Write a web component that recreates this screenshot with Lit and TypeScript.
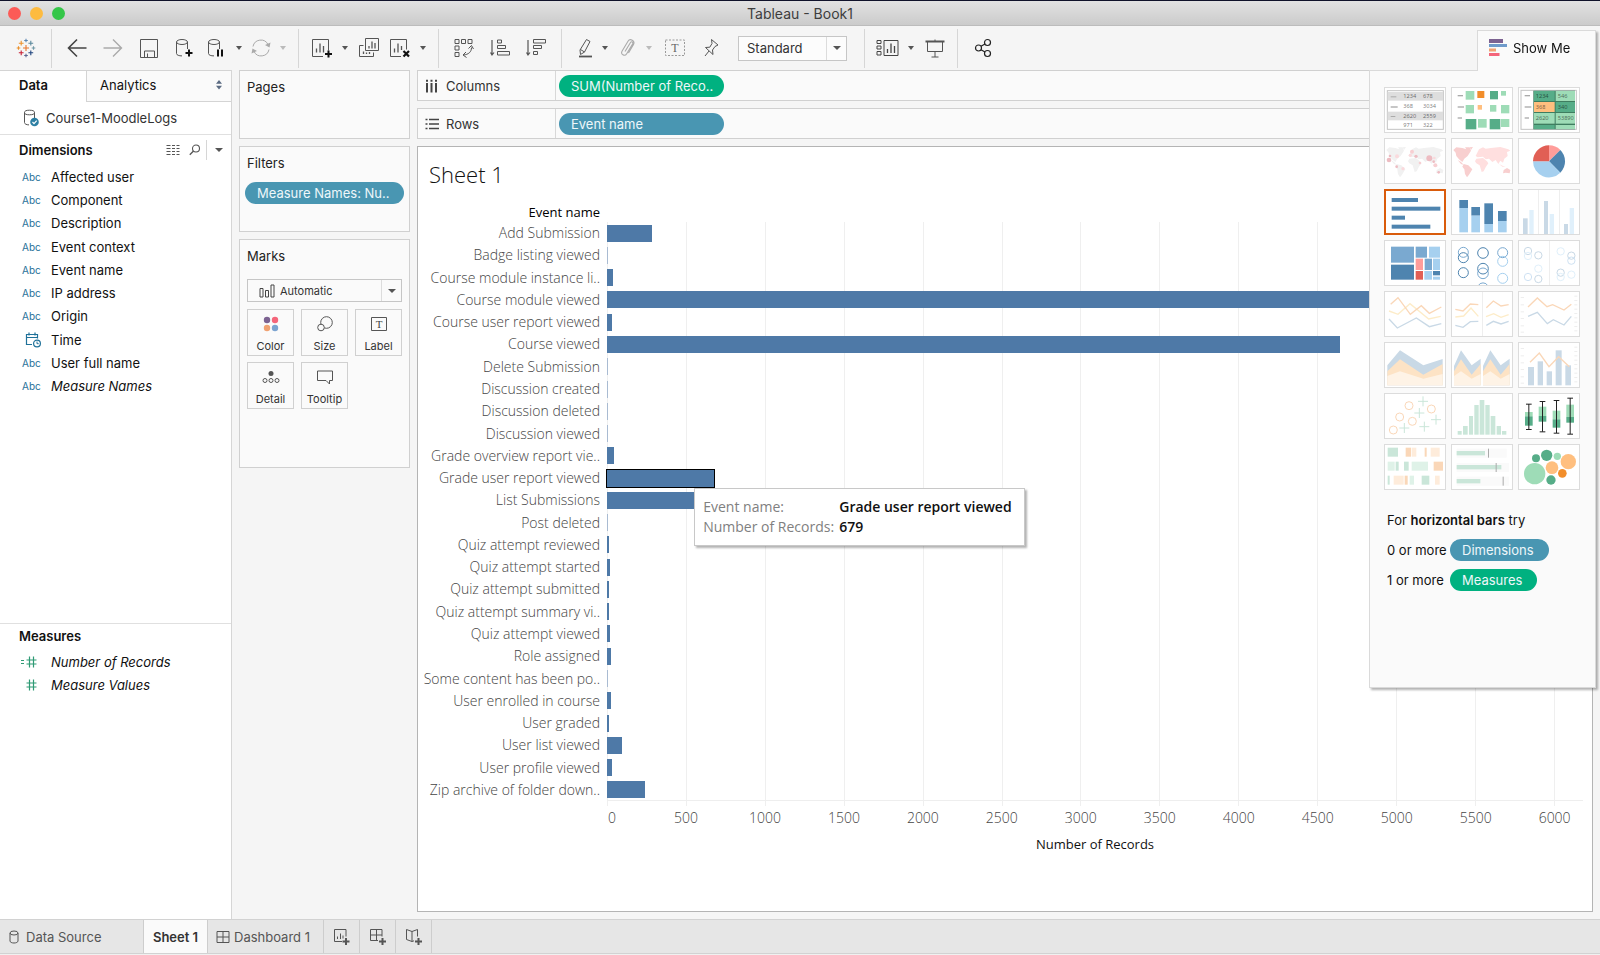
import { LitElement, html, svg, css, nothing, type TemplateResult } from "lit";
import { customElement, property } from "lit/decorators.js";
import { classMap } from "lit/directives/class-map.js";
import { styleMap } from "lit/directives/style-map.js";

/* ---------- icons ---------- */

const icon = (w: number, h: number, body: unknown) => html`<svg
  width=${w} height=${h} viewBox="0 0 ${w} ${h}" fill="none" stroke="#555" stroke-width="1" aria-hidden="true">${body}</svg>`;

const plusMark = (x: number, y: number, c = "#111") =>
  svg`<path d="M${x - 3.5} ${y}h7M${x} ${y - 3.5}v7" stroke=${c} stroke-width="2"/>`;

const logoPlus = (x: number, y: number, r: number, c: string) =>
  svg`<path d="M${x - r} ${y}h${2 * r}M${x} ${y - r}v${2 * r}" stroke=${c} stroke-width="1.1"/>`;

const cylinder = svg`<path d="M1.5 4v11.5c0 1.6 2.6 2.4 5.5 2.4M12.5 4v7"/><ellipse cx="7" cy="4" rx="5.5" ry="2.5"/>`;

const I = {
  logo: icon(20, 20, [
    logoPlus(10, 10, 3, "#e8762d"), logoPlus(10, 2.5, 1.8, "#5c87b2"), logoPlus(10, 17.5, 1.8, "#5c6692"),
    logoPlus(2.5, 10, 1.8, "#eb912c"), logoPlus(17.5, 10, 1.8, "#7199a6"),
    logoPlus(5.2, 5.2, 2.4, "#eb912c"), logoPlus(14.8, 5.2, 2.4, "#59879b"),
    logoPlus(5.2, 14.8, 2.4, "#c72035"), logoPlus(14.8, 14.8, 2.4, "#1f447e"),
  ]),
  back: icon(20, 20, svg`<path d="M19.5 10H1.5M10 1.5L1.5 10l8.500 8.500" stroke="#444" stroke-width="1.6"/>`),
  forward: icon(20, 20, svg`<path d="M.5 10h18M10 1.500l8.500 8.500-8.500 8.500" stroke="#aaa" stroke-width="1.4"/>`),
  save: icon(18, 19, svg`<path d="M.5.5h17v18H.5zM4.500 18.500v-6.500h10v6.500M7.500 18v-3.500"/>`),
  addData: icon(20, 20, [cylinder, plusMark(14, 15)]),
  pauseData: icon(20, 20, [cylinder, svg`<path d="M11 11.500v7M15 11.500v7" stroke="#111" stroke-width="2"/>`]),
  refresh: icon(20, 20, svg`<g stroke="#aaa"><path d="M2 8.500a8 8 0 0 1 15-2M18 11.500a8 8 0 0 1-15 2"/><path d="M19.500 4.500l-1 5-4.500-2.500zM.500 15.500l1-5 4.500 2.500z" fill="#aaa" stroke="none"/></g>`),
  addSheet: icon(22, 20, [svg`<path d="M12 18.500H1.500V1.500h16v11"/><path d="M5.500 10.500v4M9 5.500v9M12.500 8v6.500" stroke-width="1.300"/>`, plusMark(17.5, 16)]),
  duplicate: icon(20, 20, svg`<path d="M6.500.500h13v12h-13zM4.500 7.500h-4v11h14v-4"/><path d="M10 8v2.500M13 3.500v7M16 5v5.500M4.500 13.500v2.500M7.500 14.500v1.500M10.500 14v2" stroke-width="1.300"/>`),
  clear: icon(22, 20, svg`<path d="M12 18.500H1.500V1.500h16v10"/><path d="M5.500 10.500v4M9 5.500v9M12.500 8v4" stroke-width="1.300"/><path d="M14.500 13l5.500 5.500M20 13l-5.500 5.500" stroke="#111" stroke-width="2.200"/>`),
  swap: icon(20, 20, svg`<path d="M1 1.500h4v4H1zM7.500 1.500h4v4h-4zM14 1.500h4v4h-4zM1 8h4v4H1zM1 14.500h4v4H1z"/><path d="M17.500 9.500c0 4.500-3 7-8 7.500"/><path d="M14.500 10.500l3-3 2 3.500M12 14l-3 3 3.500 2.500"/>`),
  sortAsc: icon(20, 20, svg`<path d="M2 2v15M.500 14.500L2 17l2-2.500" stroke-width="1.200"/><path d="M7.500 2h4v3h-4zM7.500 7.500h8v3h-8zM7.500 13.500h12v3.500h-12z"/>`),
  sortDesc: icon(20, 20, svg`<path d="M2 2v15M.500 14.500L2 17l2-2.500" stroke-width="1.200"/><path d="M7.500 1.500h12v3.500h-12zM7.500 7.500h8v3h-8zM7.500 13.500h4v3h-4z"/>`),
  highlight: icon(20, 20, svg`<path d="M13.500 1.500l3.500 2-5.500 10.500-4 2.500-.500-4.500z"/><path d="M7.500 11.500l4 2.500" /><path d="M6 18.500h13" stroke-width="1.800"/>`),
  clip: icon(20, 20, svg`<path d="M8 13.500l5.500-9c1-1.500 3-.300 2.200 1.200l-6 10c-2 3.200-6.500.700-4.700-2.500l6-10c2-3.200 7.500-.500 5.500 3.300l-5 8.500" stroke="#aaa" stroke-width="1.100"/>`),
  text: icon(20, 18, svg`<path d="M.500 1h19v15.500H.500z" stroke="#999" stroke-dasharray="2 1.500"/><text x="10" y="13" text-anchor="middle" font-family="Liberation Serif" font-size="12" fill="#666" stroke="none">T</text>`),
  pin: icon(18, 20, svg`<path d="M9.500 1.500l6.500 5.500-3 1.500-2.500 3.500.500 4.500L3.500 9.500l4.300-.300 2.200-3.700z"/><path d="M7 13l-4 5"/>`),
  cards: icon(24, 18, svg`<path d="M1 1.500h4v3H1zM1 7h4v3H1zM1 12.500h4v3.500H1zM8 1.500h14v15H8z" stroke="#444"/><path d="M11.500 10v4M15 4.500v9.500M18.500 7v7" stroke="#444" stroke-width="1.300"/>`),
  present: icon(20, 19, svg`<path d="M.500 2.500h19" stroke-width="2"/><path d="M2.500 3v9.500h15V3M10 .500v2M10 12.500V18M6.500 18h7"/>`),
  share: icon(18, 20, svg`<g stroke="#222" stroke-width="1.200"><circle cx="4.500" cy="10" r="3"/><circle cx="13.500" cy="4.500" r="3"/><circle cx="13.500" cy="15.500" r="3"/><path d="M7 8.300l4-2.300M7 11.700l4 2.300"/></g>`),
  source: icon(18, 18, svg`<path d="M1.500 3.500v10c0 1.500 2 2.300 4.500 2.400M11.500 3.500V9"/><ellipse cx="6.500" cy="3.500" rx="5" ry="2.300"/><circle cx="11.500" cy="13" r="4.300" fill="#2c7fa3" stroke="none"/><path d="M9.500 13l1.500 1.600 2.700-3" stroke="#fff" stroke-width="1.200"/>`),
  list: icon(14, 12, svg`<path d="M.500 1.500h4M.500 4.500h4M.500 7.500h4M.500 10.500h4M6 1.500h3M6 4.500h3M6 7.500h3M6 10.500h3M10.500 1.500h3M10.500 4.500h3M10.500 7.500h3M10.500 10.500h3"/>`),
  search: icon(12, 12, svg`<circle cx="7" cy="4.500" r="3.500" stroke-width="1.100"/><path d="M4.500 7L.800 10.800" stroke-width="1.300"/>`),
  updown: icon(8, 12, svg`<path d="M1 4.800h6L4 1zM1 6.800h6l-3 3.800z" fill="#5b6b82" stroke="none"/>`),
  calendar: icon(16, 16, svg`<path d="M7 12.500H1.500v-10h11v4M1.500 5.500h11M4 .500v3M10 .500v3" stroke="#1f7199" stroke-width="1.200"/><circle cx="12" cy="11.500" r="3.400" stroke="#1f7199" stroke-width="1.200"/><path d="M12 9.500v2.200h1.700" stroke="#1f7199"/>`),
  hash: icon(18, 12, svg`<g stroke="#2e9a74" stroke-width="1.200"><path d="M6.500 4h10M6.500 8h10M9.500.500v11M13.500.500v11"/></g>`),
  calcHash: icon(18, 12, svg`<g stroke="#2e9a74" stroke-width="1.200"><path d="M6.500 4h10M6.500 8h10M9.500.500v11M13.500.500v11M1 4.500h3M1 7.500h3"/></g>`),
  columns: icon(14, 14, svg`<path d="M2 4V13.500M6.500 4V13.500M11 4V13.500M2 .800v2M6.500 .800v2M11 .800v2" stroke="#444" stroke-width="2"/>`),
  rows: icon(14, 12, svg`<path d="M4 1.500h10M4 6h10M4 10.500h10M.500 1.500h2M.500 6h2M.500 10.500h2" stroke="#444" stroke-width="1.700"/>`),
  bars: icon(16, 14, svg`<path d="M1 4.500h3v8.500H1zM6.500 6.500h3v6.500h-3zM12 1h3v12h-3z" stroke="#444"/>`),
  color: icon(16, 16, svg`<g stroke="none"><circle cx="4" cy="4" r="3.200" fill="#7c6291"/><circle cx="12" cy="4" r="3.200" fill="#f4657a"/><circle cx="4" cy="12" r="3.200" fill="#f0a171"/><circle cx="12" cy="12" r="3.200" fill="#7ba3d0"/></g>`),
  size: icon(16, 16, svg`<circle cx="9.500" cy="6.500" r="5.800"/><circle cx="4" cy="11.500" r="3.300" fill="#fafafa"/>`),
  label: icon(16, 14, svg`<path d="M.500.500h15v13H.500z"/><text x="8" y="11" text-anchor="middle" font-family="Liberation Serif" font-size="11" fill="#444" stroke="none">T</text>`),
  detail: icon(18, 14, svg`<circle cx="9" cy="3.500" r="2.500" fill="#555" stroke="none"/><circle cx="3" cy="10.500" r="2"/><circle cx="9" cy="10.500" r="2"/><circle cx="15" cy="10.500" r="2"/>`),
  tooltip: icon(16, 15, svg`<path d="M.500 1h15v9.500h-3v3.500L9 10.500H.500z"/>`),
  tabSource: icon(10, 14, svg`<path d="M1 3v8c0 1.200 1.800 2 4 2s4-.800 4-2V3"/><ellipse cx="5" cy="3" rx="4" ry="2"/>`),
  tabDash: icon(14, 14, svg`<path d="M1 1.500h12v11H1zM7 1.500v11M1 7h12"/>`),
  tabNewSheet: icon(18, 18, [svg`<path d="M9 13.500H1.500V1.500h11.500v7"/><path d="M4.500 8.500v2.500M7.500 5.500v5.500M10 7.500v3"/>`, plusMark(13, 13.5, "#555")]),
  tabNewDash: icon(18, 18, [svg`<path d="M9 12.500H1.500V1.500h11.500v7M7.500 1.500v11M1.500 7h11.500"/>`, plusMark(13.5, 13.5, "#555")]),
  tabNewStory: icon(18, 18, [svg`<path d="M7 3.500L1.500 1.500v10L7 13.500l2-.700M7 3.500l5.500-2v7M7 3.500v10"/>`, plusMark(13.5, 13.5, "#555")]),
  showMe: icon(18, 18, svg`<g stroke="none"><path d="M0 0h14v4H0z" fill="#7c6291"/><path d="M0 5h18v3H0z" fill="#6f9bcb"/><path d="M0 9.500h7v3H0z" fill="#f0a171"/><path d="M0 14h10.500v3H0z" fill="#f4657a"/></g>`),
};

/* ---------- chart type thumbnails, drawn on a 186 x 138 board ---------- */

const R = (x: number, y: number, w: number, h: number, f: string) =>
  svg`<rect x=${x} y=${y} width=${w} height=${h} fill=${f}/>`;
const C = (x: number, y: number, r: number, f: string) => svg`<circle cx=${x} cy=${y} r=${r} fill=${f}/>`;
const O = (x: number, y: number, r: number, c: string) =>
  svg`<circle cx=${x} cy=${y} r=${r} fill="none" stroke=${c} stroke-width="3"/>`;
const L = (pts: string, c: string, w = 4) => svg`<polyline points=${pts} fill="none" stroke=${c} stroke-width=${w}/>`;
const P = (pts: string, f: string) => svg`<polygon points=${pts} fill=${f}/>`;
const T = (x: number, y: number, t: string) =>
  svg`<text x=${x} y=${y} font-family="Noto Sans, sans-serif" font-size="17" fill="#000" fill-opacity=".55">${t}</text>`;

const NB = "#4e84af", LB = "#a6d0ef", MB = "#7aa9d0", DG = "#56ad88", LG = "#9edcb7", OR = "#f28e2b", LO = "#ffbf7f";
const PO = "#fad7b8", PY = "#fdecc8", PB = "#c9d9e6", PG = "#cae6d9";

const world = (a: string, b: string, c = b) => [
  P("7,36 16,28 34,30 46,34 42,28 56,28 60,38 50,54 40,62 34,72 24,64 16,54 14,44", a),
  P("20,66 30,72 38,80 30,78", a),
  P("38,78 52,82 64,94 54,110 48,118 42,108 40,94 34,86", a),
  P("56,28 66,27 60,36", a),
  P("78,46 84,34 96,28 104,32 120,30 148,27 172,34 178,38 168,42 170,54 160,62 156,74 148,68 142,78 134,66 124,72 114,62 104,64 96,56 80,58 74,54", b),
  P("76,62 96,60 108,70 112,76 104,88 98,100 92,102 86,82 76,76 72,70", b),
  P("144,78 156,84 164,86 154,86", b), P("158,96 168,90 178,96 176,106 164,104 156,106", c),
];

const thumbs: { name: string; body: unknown; on?: boolean }[] = [
  { name: "text table", body: [
    svg`<rect x="10" y="11" width="168" height="116" fill="#fff" stroke="#c4c4c4" stroke-width="3"/>`,
    R(11, 15, 166, 26, "#dedede"), R(11, 74, 166, 26, "#dedede"),
    R(20, 28, 17, 3, "#aaa"), R(20, 58, 21, 4, "#aaa"), R(20, 87, 14, 3, "#aaa"),
    T(58, 34, "1234"), T(117, 34, "678"), T(58, 64, "368"), T(117, 64, "3034"),
    T(58, 94, "2620"), T(117, 94, "2559"), T(58, 121, "971"), T(117, 121, "322"),
  ] },
  { name: "heat map", body: [
    R(20, 24, 16, 4, "#aaa"), R(20, 58, 19, 4, "#aaa"), R(20, 91, 13, 4, "#aaa"),
    R(44, 12, 26, 26, LG), R(79, 12, 21, 21, OR), R(117, 12, 24, 25, DG), R(150, 12, 15, 14, LG),
    R(44, 54, 25, 25, LG), R(80, 54, 13, 14, LO), R(117, 54, 19, 20, LG), R(150, 54, 25, 25, LG),
    R(44, 96, 32, 31, DG), R(81, 96, 26, 26, LG), R(116, 96, 32, 31, DG), R(150, 96, 25, 24, LG),
  ] },
  { name: "highlight table", body: [
    svg`<rect x="9" y="10" width="166" height="117" fill="#fff" stroke="#c4c4c4" stroke-width="3"/>`,
    R(46, 11, 125, 116, "#3f7d60"),
    R(48, 12, 62, 30, DG), R(113, 12, 58, 30, LG), R(48, 45, 62, 30, LO), R(113, 45, 58, 30, DG),
    R(48, 78, 62, 32, LG), R(113, 78, 58, 32, LG), R(48, 114, 62, 12, DG), R(113, 114, 58, 12, LG),
    R(20, 24, 16, 4, "#aaa"), R(20, 58, 20, 4, "#aaa"), R(20, 91, 13, 4, "#aaa"),
    T(53, 32, "1234"), T(119, 32, "546"), T(53, 66, "368"), T(119, 66, "340"), T(53, 100, "2620"), T(119, 100, "53890"),
  ] },
  { name: "symbol map", body: [world("#f1f1f1", "#f1f1f1"),
    C(15, 66, 7, "#edbcc2"), C(18, 54, 4, "#edbcc2"), C(39, 55, 6, "#fadadd"), C(38, 86, 4, "#edbcc2"), C(57, 92, 5, "#fadadd"),
    C(79, 52, 5, "#fadadd"), C(84, 41, 6, "#f7cfd2"), C(96, 55, 5, "#edbcc2"), C(108, 75, 4, "#f7cfd2"), C(136, 61, 9, "#edbcc2"),
    C(149, 71, 4, "#edbcc2"), C(154, 82, 6, "#f7cfd2"), C(151, 60, 4, "#fadadd"), C(164, 103, 4, "#edbcc2")] },
  { name: "map", body: world("#f8cfcf", "#ffdfdf", "#f8cfcf") },
  { name: "pie chart", body: svg`<g transform="translate(93 70)"><path d="M0 0V-48A48 48 0 0 1 34-34z" fill="#ff9d9a"/><path d="M0 0L34-34A48 48 0 0 1 34 34z" fill=${NB}/><path d="M0 0L34 34A48 48 0 0 1-48 0z" fill=${LB}/><path d="M0 0H-48A48 48 0 0 1 0-48z" fill="#e15f55"/></g>` },
  { name: "horizontal bars", on: true, body: [R(20, 24, 79, 12, NB), R(20, 50, 146, 12, NB), R(20, 77, 40, 12, NB), R(20, 104, 116, 12, NB)] },
  { name: "stacked bars", body: [
    R(25, 33, 26, 24, NB), R(25, 57, 26, 73, LB), R(61, 54, 26, 26, NB), R(61, 80, 26, 50, LB),
    R(100, 43, 26, 62, NB), R(100, 105, 26, 25, LB), R(141, 66, 26, 30, NB), R(141, 96, 26, 34, LB)] },
  { name: "side-by-side bars", body: [
    R(60, 3, 3, 132, "#eee"), R(123, 3, 3, 132, "#eee"),
    R(15, 88, 14, 47, PB), R(34, 63, 13, 72, "#e0f0fb"), R(78, 36, 12, 99, PB), R(95, 75, 13, 60, "#e0f0fb"),
    R(138, 105, 12, 30, PB), R(155, 57, 13, 78, "#e0f0fb")] },
  { name: "treemap", body: [
    R(21, 20, 69, 48, MB), R(21, 74, 69, 45, NB), R(95, 20, 34, 33, MB), R(135, 20, 33, 33, LB),
    R(95, 56, 22, 34, "#ff9d9a"), R(122, 56, 22, 34, MB), R(147, 56, 21, 34, LB),
    R(95, 93, 22, 26, "#e15f55"), R(121, 93, 23, 26, LB), R(147, 93, 21, 13, NB), R(147, 110, 21, 9, LB)] },
  { name: "circle views", body: [
    O(37, 37, 15, MB), O(37, 53, 15, NB), O(37, 98, 15, NB), O(96, 39, 16, NB), O(96, 86, 16, NB), O(96, 100, 16, MB),
    svg`<path d="M82 137a15 13 0 0 1 28 0" fill="none" stroke=${MB} stroke-width="3"/>`,
    O(155, 38, 15, MB), O(155, 64, 15, LB), O(155, 115, 15, LB)] },
  { name: "side-by-side circles", body: [
    R(93, 3, 3, 132, "#eee"), O(30, 33, 11, PB), O(30, 48, 11, "#e0f0fb"), O(61, 46, 11, PB), O(61, 86, 11, "#e0f0fb"),
    O(30, 111, 11, "#cfe2f3"), O(61, 117, 11, PB), O(128, 34, 11, "#e0f0fb"), O(160, 47, 11, PB), O(160, 62, 11, "#cfe2f3"),
    O(128, 98, 11, PB), O(128, 111, 11, "#e0f0fb"), O(160, 104, 11, "#e0f0fb")] },
  { name: "lines (continuous)", body: [L("15,60 42,70 78,38 134,84 170,76", PY), L("20,40 42,20 79,70 112,44 136,67 172,48", PO), L("15,84 40,111 97,81 136,107 172,98", PB)] },
  { name: "lines (discrete)", body: [
    R(93, 3, 3, 132, "#eee"), L("13,78 38,75 60,51 82,76", PY), L("105,77 128,68 150,79 173,71", PY),
    L("13,55 36,60 58,39 82,41", PO), L("106,50 127,30 150,45 173,41", PO),
    L("13,103 36,109 58,92 82,91", PB), L("106,103 127,91 150,99 173,91", PB)] },
  { name: "dual lines", body: [
    L("30,48 58,21 87,47 104,41 138,57 160,40", PO), L("30,76 58,64 88,98 106,86 138,102 160,76", PB),
    [18, 40, 61, 81, 103, 122].map((y) => R(8, y, 10, 3, "#eee")),
    [14, 27, 40, 53, 66, 79, 92, 105, 118].map((y) => R(169, y, 9, 3, "#eee"))] },
  { name: "area charts (continuous)", body: [
    P("10,70 48,25 118,70 176,51 176,130 10,130", PB), P("10,88 48,52 118,98 176,66 176,130 10,130", "#fde3c5"), P("10,102 48,88 118,110 176,96 176,130 10,130", "#fef3e6")] },
  { name: "area charts (discrete)", body: [
    P("9,72 30,25 62,70 89,50 89,130 9,130", PB), P("9,88 30,52 62,98 89,66 89,130 9,130", "#fde3c5"), P("9,102 30,88 62,110 89,96 89,130 9,130", "#fef3e6"),
    P("96,72 118,25 149,70 176,50 176,130 96,130", PB), P("96,88 118,52 149,98 176,66 176,130 96,130", "#fde3c5"), P("96,102 118,88 149,110 176,96 176,130 96,130", "#fef3e6")] },
  { name: "dual combination", body: [
    R(30, 75, 18, 55, PB), R(59, 58, 16, 72, PB), R(86, 88, 16, 42, PB), R(113, 25, 18, 105, PB), R(142, 70, 17, 60, PB),
    L("36,61 64,33 93,74 122,44 154,74", PO), [18, 40, 61, 81, 103, 122].map((y) => R(8, y, 10, 3, "#eee")),
    [14, 27, 40, 53, 66, 79, 92, 105, 118].map((y) => R(169, y, 9, 3, "#eee"))] },
  { name: "scatter plot", body: [
    O(75, 38, 12, PO), O(142, 48, 12, PO), O(47, 72, 12, PO), O(85, 85, 12, PO), O(28, 111, 12, PO),
    svg`<path d="M102 25h30M117 10v30M91 60h30M106 45v30M141 80h30M156 65v30M106 101h30M121 86v30M46 105h30M61 90v30" stroke=${PG} stroke-width="3"/>`] },
  { name: "histogram", body: [[20, 114, 12], [36, 99, 14], [54, 69, 12], [70, 36, 13], [86, 21, 14], [103, 36, 13], [119, 69, 14], [137, 99, 13], [153, 114, 13]].map(([x, y, w]) => R(x, y, w, 125 - y, PG)) },
  { name: "box-and-whisker plot", body: [[32, 33, 57, 70, 98, 109], [73, 25, 41, 69, 86, 116], [115, 22, 53, 79, 104, 120], [156, 15, 35, 72, 89, 123]].map(([x, t, a, b, c, e]) => [
    R(x - 11, a, 23, b - a, LG), R(x - 11, b, 23, c - b, DG), R(x - 1, t, 3, e - t, "#222"), R(x - 8, t - 1, 17, 3, "#222"), R(x - 8, e - 1, 17, 3, "#222")]) },
  { name: "gantt chart", body: [
    R(11, 11, 31, 27, PG), R(65, 11, 16, 27, PO), R(83, 11, 14, 27, "#feecdb"), R(122, 11, 6, 27, PO), R(140, 11, 27, 27, "#feecdb"),
    R(11, 53, 21, 27, "#dff2e8"), R(35, 53, 9, 27, PG), R(60, 53, 14, 27, PG), R(83, 53, 49, 27, "#dff2e8"), R(149, 53, 28, 27, PO),
    R(11, 95, 6, 27, PG), R(29, 95, 30, 27, "#feecdb"), R(62, 95, 9, 27, PO), R(77, 95, 13, 27, "#dff2e8"), R(113, 95, 23, 27, PG), R(153, 95, 14, 27, "#feecdb")] },
  { name: "bullet graph", body: [
    R(17, 14, 150, 27, "#fafafa"), R(17, 57, 157, 27, "#fafafa"), R(17, 98, 157, 27, "#fafafa"),
    R(17, 21, 85, 13, PG), R(17, 63, 134, 13, PG), R(17, 105, 71, 13, PG), R(111, 14, 3, 27, "#aaa"), R(134, 57, 3, 27, "#aaa"), R(155, 98, 3, 27, "#aaa")] },
  { name: "packed bubbles", body: [C(50, 89, 32, LG), C(54, 43, 12, DG), C(86, 34, 17, DG), C(118, 37, 11, LG), C(151, 53, 23, LO), C(102, 71, 19, LO), C(133, 88, 13, OR), C(99, 108, 14, DG)] },
];

/* ---------- data ---------- */

const events: [string, number][] = [
  ["Add Submission", 288], ["Badge listing viewed", 2], ["Course module instance li..", 38], ["Course module viewed", 5880],
  ["Course user report viewed", 33], ["Course viewed", 4642], ["Delete Submission", 2], ["Discussion created", 2],
  ["Discussion deleted", 2], ["Discussion viewed", 2], ["Grade overview report vie..", 45], ["Grade user report viewed", 679],
  ["List Submissions", 640], ["Post deleted", 2], ["Quiz attempt reviewed", 12], ["Quiz attempt started", 18],
  ["Quiz attempt submitted", 12], ["Quiz attempt summary vi..", 12], ["Quiz attempt viewed", 18], ["Role assigned", 24],
  ["Some content has been po..", 2], ["User enrolled in course", 24], ["User graded", 12], ["User list viewed", 95],
  ["User profile viewed", 32], ["Zip archive of folder down..", 242],
];
const axisMax = 6180;
const step = 500;
const ticks = Array.from({ length: Math.floor(axisMax / step) + 1 }, (_, i) => i * step);
const span = (t: number) => Math.min(step, axisMax - t);

const base = css`
  :host { display: block; }
  * { box-sizing: border-box; }
  svg { display: block; flex: none; }
  button, select { font: inherit; color: inherit; border: 0; padding: 0; margin: 0; background: none; border-radius: 0; }
  .pill {
    display: block; height: 22px; line-height: 22px; border-radius: 11px; padding: 0 12px; color: #eef7fa;
    background: #4996b2; text-align: left; white-space: nowrap;
  }
  .green { background: #00b180; }
  .caret { width: 0; height: 0; border: 4px solid transparent; border-top: 4px solid #555; border-bottom: 0; }
  .combo { display: grid; grid-template-columns: 1fr auto; border: 1px solid #c6c6c6; background: #fcfcfc; }
  .combo select { grid-area: 1 / 1 / 2 / 3; width: 100%; height: 100%; appearance: none; outline: none; }
  .combo .drop {
    grid-area: 1 / 2; width: 20px; border-left: 1px solid #dcdcdc; display: grid; place-items: center; pointer-events: none;
  }
`;

@customElement("tool-bar")
class ToolBar extends LitElement {
  static styles = [base, css`
    :host { background: #f5f5f5; height: 44px; }
    .bar { display: flex; height: 100%; align-items: center; }
    .group { display: flex; align-items: center; height: 39px; padding: 0 7px; border-right: 1px solid #d6d6d6; }
    .group:first-child { padding-left: 8px; }
    .group:last-child { border: 0; }
    button { display: grid; place-items: center; height: 30px; }
    .s { width: 28px; } .m { width: 31px; } .l { width: 36px; }
    .more { width: 16px; }
    .more .caret { border-width: 4px 3px 0; }
    .off .caret { border-top-color: #bbb; }
    .combo { width: 109px; height: 25px; margin: 0 10px 0 9px; }
    .combo select { padding-left: 8px; color: #333; }
  `];
  private tool(name: string, size: string, pic: TemplateResult, more?: "on" | "off") {
    return html`<button class=${size} aria-label=${name}>${pic}</button>${more
      ? html`<button class=${classMap({ more: true, off: more === "off" })} aria-label="${name} options"><span class="caret"></span></button>`
      : nothing}`;
  }
  render() {
    return html`<div class="bar" role="toolbar">
      <div class="group">${this.tool("Start page", "l", I.logo)}</div>
      <div class="group">
        ${this.tool("Undo", "l", I.back)}${this.tool("Redo", "l", I.forward)}${this.tool("Save", "l", I.save)}
        ${this.tool("New data source", "l", I.addData)}${this.tool("Pause auto updates", "s", I.pauseData, "on")}
        ${this.tool("Run update", "s", I.refresh, "off")}
      </div>
      <div class="group">
        ${this.tool("New worksheet", "m", I.addSheet, "on")}${this.tool("Duplicate sheet", "m", I.duplicate)}
        ${this.tool("Clear sheet", "m", I.clear, "on")}
      </div>
      <div class="group">
        ${this.tool("Swap rows and columns", "l", I.swap)}${this.tool("Sort ascending", "l", I.sortAsc)}
        ${this.tool("Sort descending", "l", I.sortDesc)}
      </div>
      <div class="group">
        ${this.tool("Highlight", "s", I.highlight, "on")}${this.tool("Group members", "s", I.clip, "off")}
        ${this.tool("Show mark labels", "l", I.text)}${this.tool("Fix axes", "l", I.pin)}
        <div class="combo"><select aria-label="Fit"><option>Standard</option><option>Entire View</option></select>
          <span class="drop"><span class="caret"></span></span></div>
      </div>
      <div class="group">${this.tool("Show/hide cards", "m", I.cards, "on")}${this.tool("Presentation mode", "m", I.present)}</div>
      <div class="group">${this.tool("Share", "l", I.share)}</div>
    </div>`;
  }
}

@customElement("data-pane")
class DataPane extends LitElement {
  static styles = [base, css`
    :host { display: flex; flex-direction: column; background: #fff; border-right: 1px solid #d6d6d6; }
    .tabs { display: flex; height: 32px; border-top: 1px solid #d4d4d4; }
    .tabs button { text-align: left; }
    .data { width: 86px; padding: 0 0 3px 19px; font-weight: 600; }
    .analytics {
      flex: 1; display: flex; align-items: center; justify-content: space-between; padding: 0 8px 2px 13px;
      border-left: 1px solid #d4d4d4; border-bottom: 1px solid #d4d4d4; background: #fafafa;
    }
    .source { display: flex; align-items: center; gap: 5px; height: 33px; padding-left: 23px; border-bottom: 1px solid #e0e0e0; color: #333; }
    .head { display: flex; align-items: center; height: 30px; padding-left: 19px; }
    h2 { margin: 0; font-size: 13px; font-weight: 600; flex: 1; }
    .head button { height: 20px; display: grid; place-items: center; }
    .view { width: 14px; margin-right: 8px; }
    .find { width: 14px; margin-right: 4px; }
    .menu { width: 25px; border-left: 1px solid #d6d6d6; }
    ul { list-style: none; margin: 0; padding: 0; display: grid; grid-auto-rows: 1fr; }
    .dims { flex: 1; }
    .dims ul { height: 233px; }
    li { display: flex; align-items: center; }
    li .kind { width: 31px; margin-left: 20px; display: flex; padding-left: 2px; font-size: 10px; font-style: normal; color: #1f7199; }
    .date .kind { padding-left: 5px; }
    .num .kind { padding-left: 0; }
    .gen { font-style: italic; }
    .measures { height: 296px; border-top: 1px solid #e0e0e0; }
    .measures .head { height: 24px; }
    .measures ul { height: 46px; margin-top: 2px; }
  `];
  render() {
    const dims = ["Affected user", "Component", "Description", "Event context", "Event name", "IP address", "Origin", "Time", "User full name", "Measure Names"];
    return html`
      <div class="tabs" role="tablist">
        <button class="data" role="tab" aria-selected="true">Data</button>
        <button class="analytics" role="tab" aria-selected="false">Analytics${I.updown}</button>
      </div>
      <div class="source">${I.source}<span>Course1-MoodleLogs</span></div>
      <section class="dims">
        <div class="head"><h2>Dimensions</h2>
          <button class="view" aria-label="View data">${I.list}</button>
          <button class="find" aria-label="Find field">${I.search}</button>
          <button class="menu" aria-label="Dimensions menu"><span class="caret"></span></button>
        </div>
        <ul>${dims.map((d) => html`<li class=${classMap({ gen: d === "Measure Names", date: d === "Time" })}>
          <span class="kind">${d === "Time" ? I.calendar : "Abc"}</span>${d}</li>`)}</ul>
      </section>
      <section class="measures">
        <div class="head"><h2>Measures</h2></div>
        <ul>
          <li class="gen num"><span class="kind">${I.calcHash}</span>Number of Records</li>
          <li class="gen num"><span class="kind">${I.hash}</span>Measure Values</li>
        </ul>
      </section>`;
  }
}

@customElement("card-column")
class CardColumn extends LitElement {
  static styles = [base, css`
    :host { display: flex; flex-direction: column; gap: 7px; }
    section { border: 1px solid #d0d0d0; background: #fafafa; padding: 6px 7px; }
    h2 { margin: 0 0 9px; font-size: 13px; font-weight: 400; line-height: 20px; color: #222; }
    .pages { height: 69px; }
    .filters { height: 86px; padding: 6px 5px; }
    .filters h2 { padding-left: 2px; }
    .filters .pill { width: 100%; }
    .marks { height: 229px; font-size: 11px; color: #333; }
    .marks h2 { margin-bottom: 13px; }
    .combo { height: 23px; background: #fafafa; align-items: center; }
    .combo select { padding-left: 32px; }
    .combo .drop { height: 100%; }
    .combo svg { grid-area: 1 / 1; margin-left: 11px; pointer-events: none; }
    .cells { display: grid; grid-template-columns: repeat(3, 1fr); gap: 6px 7px; margin-top: 7px; }
    .cells button {
      height: 47px; border: 1px solid #d0d0d0; display: grid; grid-template-rows: 28px 16px; place-items: center;
    }
  `];
  render() {
    const cell = (name: string, pic: TemplateResult) => html`<button>${pic}<span>${name}</span></button>`;
    return html`
      <section class="pages"><h2>Pages</h2></section>
      <section class="filters"><h2>Filters</h2><button class="pill">Measure Names: Nu..</button></section>
      <section class="marks"><h2>Marks</h2>
        <div class="combo"><select aria-label="Mark type"><option>Automatic</option><option>Bar</option></select>
          ${I.bars}<span class="drop"><span class="caret"></span></span></div>
        <div class="cells">${cell("Color", I.color)}${cell("Size", I.size)}${cell("Label", I.label)}${cell("Detail", I.detail)}${cell("Tooltip", I.tooltip)}</div>
      </section>`;
  }
}

@customElement("bar-sheet")
class BarSheet extends LitElement {
  @property() selected = "Grade user report viewed";
  static styles = [base, css`
    :host {
      display: flex; flex-direction: column; background: #fff; border: 1px solid #b4b4b4;
      font-family: "Open Sans", "Noto Sans", sans-serif; color: #444; padding: 12px 9px 57px 0;
    }
    h1 { margin: 0 0 13px 11px; font-size: 22px; font-weight: 300; line-height: 30px; color: #111; }
    .chart { flex: 1; display: grid; grid-template-columns: 189px 1fr; grid-template-rows: 20px 1fr auto; min-height: 0; }
    .head { font-size: 13px; font-weight: 500; line-height: 20px; text-align: right; padding-right: 7px; color: #000; }
    .names, .bars { grid-row: 2; display: grid; grid-auto-rows: 1fr; }
    .names { font-size: 14px; font-weight: 300; }
    .names span { display: flex; align-items: center; justify-content: flex-end; padding-right: 7px; white-space: nowrap; }
    .bars { grid-column: 2; z-index: 1; }
    .row { display: flex; align-items: center; }
    .bar { height: 17px; background: #4e79a7; }
    .faint { background: #a9bbd2; min-width: 1px; }
    .hit { outline: 1px solid #000; position: relative; z-index: 2; }
    .grid { grid-area: 2 / 2; display: flex; border-bottom: 1px solid #eee; }
    .grid i, .axis i { border-left: 1px solid #efefef; flex-basis: 0; }
    .axis { grid-area: 3 / 2; }
    .scale { display: flex; }
    .axis i { height: 5px; }
    .scale span { flex-basis: 0; min-width: 0; }
    .scale b { display: block; width: 60px; margin: 2px 0 6px -30px; text-align: center; font-size: 14px; font-weight: 300; line-height: 20px; }
    .scale span:first-child b { margin-left: 1px; text-align: left; }
    .title { text-align: center; font-size: 13px; font-weight: 500; line-height: 20px; color: #111; }
    .tip {
      position: absolute; left: calc(100% - 20px); top: 18px; background: #fff; border: 1px solid #c8c8c8; width: 331px; height: 58px;
      box-shadow: 2px 2px 2px rgba(0, 0, 0, .3); display: grid; grid-template-columns: 136px 1fr; grid-auto-rows: 20px;
      align-content: start; align-items: center; margin: 0; padding: 8px; font-size: 14px; color: #808080; white-space: nowrap;
    }
    dt, dd { margin: 0; line-height: 20px; }
    dd { color: #111; font-weight: 600; }
  `];
  render() {
    const part = (t: number) => styleMap({ flexGrow: String(span(t)) });
    return html`<h1>Sheet 1</h1>
      <div class="chart">
        <div class="head">Event name</div>
        <div class="names">${events.map(([n]) => html`<span>${n}</span>`)}</div>
        <div class="grid">${ticks.map((t) => html`<i style=${part(t)}></i>`)}</div>
        <div class="bars">${events.map(([n, v]) => html`<div class="row">
          <div class=${classMap({ bar: true, faint: v < 6, hit: n === this.selected })} style=${styleMap({ width: `${(v / axisMax) * 100}%` })}>
            ${n === this.selected ? html`<dl class="tip"><dt>Event name:</dt><dd>${n}</dd><dt>Number of Records:</dt><dd>${v}</dd></dl>` : nothing}
          </div></div>`)}</div>
        <div class="axis">
          <div class="scale">${ticks.map((t) => html`<i style=${part(t)}></i>`)}</div>
          <div class="scale">${ticks.map((t) => html`<span style=${part(t)}><b>${t}</b></span>`)}</div>
          <div class="title">Number of Records</div>
        </div>
      </div>`;
  }
}

@customElement("show-me")
class ShowMe extends LitElement {
  static styles = [base, css`
    :host { filter: drop-shadow(2px 2px 1px rgba(0, 0, 0, .3)); width: 227px; }
    .tab {
      display: flex; align-items: center; gap: 6px; width: 119px; height: 41px; margin: 0 0 -1px auto; padding: 0 0 6px 11px;
      background: #fafafa; border: 1px solid #dadada; border-bottom: 0; position: relative; color: #111;
    }
    .body { background: #fafafa; border: 1px solid #dadada; padding: 16px 14px 92px; }
    .kinds { display: grid; grid-template-columns: repeat(3, 62px); gap: 5px; margin-bottom: 15px; }
    .kinds button { height: 46px; border: 1px solid #dcdcdc; background: #fff; }
    .kinds .on { border: 2px solid #d95b0b; }
    .kinds button { display: grid; place-items: center; overflow: hidden; }
    p { margin: 0; padding-left: 3px; height: 30px; display: flex; align-items: center; color: #111; }
    strong { font-weight: 600; }
    .count { width: 63px; }
    .pill { padding-right: 15px; }
  `];
  render() {
    return html`<button class="tab">${I.showMe}Show Me</button>
      <div class="body">
        <div class="kinds">${thumbs.map((t) => html`<button class=${t.on ? "on" : ""} aria-label=${t.name}>
          <svg width="60" height="44" viewBox="3 3 180 132">${t.body}</svg></button>`)}</div>
        <p><span>For <strong>horizontal bars</strong> try</span></p>
        <p><span class="count">0 or more</span><span class="pill">Dimensions</span></p>
        <p><span class="count">1 or more</span><span class="pill green">Measures</span></p>
      </div>`;
  }
}

@customElement("app-root")
class AppRoot extends LitElement {
  static styles = [base, css`
    :host {
      position: relative; display: flex; flex-direction: column; min-height: 100vh; overflow: hidden; background: #f5f5f5;
      font: 400 13px/20px Inter, Roboto, sans-serif; color: #111;
    }
    .title {
      height: 26px; display: grid; grid-template-columns: 1fr auto 1fr; align-items: center; background: linear-gradient(#e2e2e2, #cbcbcb);
      border-top: 1px solid #10122a; border-bottom: 1px solid #bcbcbc; font-size: 14px; color: #3d3d3d; padding-top: 1px;
    }
    .lights { display: flex; gap: 9px; padding-left: 8px; }
    .lights button { width: 13px; height: 13px; border-radius: 50%; }
    .close { background: #fc5b57; } .min { background: #fdbb40; } .zoom { background: #34c648; }
    .work { flex: 1; display: grid; grid-template-columns: 232px 171px 1fr; column-gap: 7px; padding-right: 7px; }
    .view { display: flex; flex-direction: column; gap: 7px; padding-bottom: 7px; min-width: 0; }
    .shelf { display: flex; align-items: center; height: 31px; border: 1px solid #d0d0d0; background: #fafafa; }
    .shelf h2 {
      display: flex; align-items: center; gap: 7px; width: 138px; height: 100%; padding-left: 7px; margin: 0 3px 0 0;
      border-right: 1px solid #d8d8d8; font-size: 13px; font-weight: 400; color: #333;
    }
    .shelf .pill { width: 165px; }
    bar-sheet { flex: 1; }
    show-me { position: absolute; top: 30px; right: 4px; z-index: 3; }
    .sheets { display: flex; height: 34px; background: #e6e6e6; border-top: 1px solid #d2d2d2; color: #555; }
    .sheets button { display: flex; align-items: center; justify-content: center; gap: 4px; border-right: 1px solid #cdcdcd; }
    .sheets .src { width: 144px; justify-content: flex-start; gap: 7px; padding-left: 9px; }
    .sheets .cur { width: 64px; background: #fafafa; color: #333; font-weight: 600; }
    .sheets .dash { width: 116px; justify-content: flex-start; padding-left: 8px; }
    .sheets .new { width: 36px; }
    .foot { height: 2px; background: #f0f0f0; border-top: 1px solid #d2d2d2; }
  `];
  render() {
    return html`
      <header class="title">
        <div class="lights"><button class="close" aria-label="Close"></button><button class="min" aria-label="Minimize"></button><button class="zoom" aria-label="Zoom"></button></div>
        <span>Tableau - Book1</span>
      </header>
      <tool-bar></tool-bar>
      <main class="work">
        <data-pane></data-pane>
        <card-column></card-column>
        <div class="view">
          <div class="shelf"><h2>${I.columns}Columns</h2><button class="pill green">SUM(Number of Reco..</button></div>
          <div class="shelf"><h2>${I.rows}Rows</h2><button class="pill">Event name</button></div>
          <bar-sheet></bar-sheet>
        </div>
      </main>
      <nav class="sheets">
        <button class="src">${I.tabSource}Data Source</button>
        <button class="cur">Sheet 1</button>
        <button class="dash">${I.tabDash}Dashboard 1</button>
        <button class="new" aria-label="New worksheet">${I.tabNewSheet}</button>
        <button class="new" aria-label="New dashboard">${I.tabNewDash}</button>
        <button class="new" aria-label="New story">${I.tabNewStory}</button>
      </nav>
      <div class="foot"></div>
      <show-me></show-me>`;
  }
}
